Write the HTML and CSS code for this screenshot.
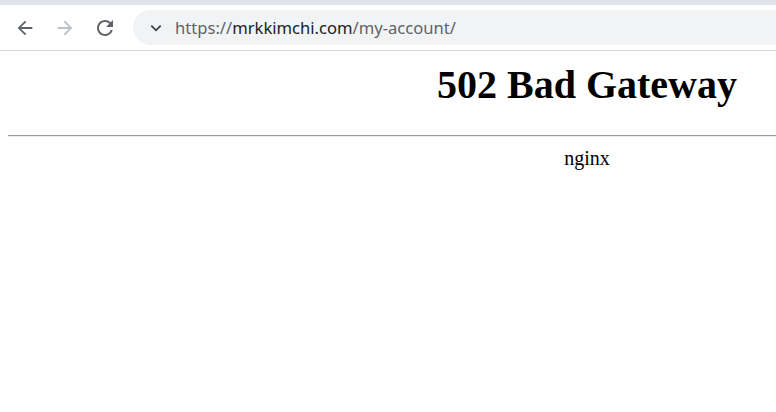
FILE: index.html
```html
<!DOCTYPE html>
<html lang="en">
<head>
    <meta charset="UTF-8">
    <title>502 Bad Gateway</title>
    <link rel="stylesheet" href="styles.css">
</head>
<body>
    <div class="tabstrip"></div>
    <div class="toolbar">
        <button class="nav-btn" aria-label="Back">
            <svg width="22" height="22" viewBox="0 0 24 24"><path d="M20 11H7.83l5.59-5.59L12 4l-8 8 8 8 1.41-1.41L7.83 13H20v-2z" fill="#5f6368"/></svg>
        </button>
        <button class="nav-btn" aria-label="Forward">
            <svg width="22" height="22" viewBox="0 0 24 24"><path d="M12 4l-1.41 1.41L16.17 11H4v2h12.17l-5.58 5.59L12 20l8-8z" fill="#bdc1c6"/></svg>
        </button>
        <button class="nav-btn" aria-label="Reload">
            <svg width="24" height="24" viewBox="0 0 24 24"><path d="M17.65 6.35A7.958 7.958 0 0 0 12 4c-4.42 0-7.99 3.58-7.99 8s3.57 8 7.99 8c3.730 0 6.840-2.55 7.73-6h-2.08A5.99 5.99 0 0 1 12 18c-3.31 0-6-2.69-6-6s2.69-6 6-6c1.66 0 3.14.69 4.22 1.78L13 11h7V4l-2.35 2.35z" fill="#5f6368"/></svg>
        </button>
        <div class="omnibox">
            <svg class="chevron" width="14" height="14" viewBox="0 0 24 24"><path d="M4 8l8 8 8-8" fill="none" stroke="#3c4043" stroke-width="3"/></svg>
            <span class="url"><span class="dim">https://</span>mrkkimchi.com<span class="dim">/my-account/</span></span>
        </div>
    </div>
    <div class="viewport">
        <div class="page">
            <h1>502 Bad Gateway</h1>
            <hr>
            <p class="server">nginx</p>
        </div>
    </div>
</body>
</html>
```

FILE: styles.css
```css
html, body {
    margin: 0;
    padding: 0;
    background-color: #fff;
    overflow: hidden;
}
.tabstrip {
    height: 5px;
    background-color: #dfe2e6;
}
.toolbar {
    display: flex;
    align-items: center;
    height: 45px;
    padding-left: 5px;
    border-bottom: 1px solid #d6d6d6;
}
.nav-btn {
    width: 40px;
    height: 36px;
    border: 0;
    padding: 0;
    background: none;
    display: flex;
    align-items: center;
    justify-content: center;
}
.omnibox {
    display: flex;
    align-items: center;
    margin-left: 8px;
    height: 35px;
    flex: 1;
    background-color: #f1f3f4;
    border-radius: 18px 0 0 18px;
    padding-left: 16px;
}
.chevron {
    margin-right: 12px;
}
.url {
    font-family: "Noto Sans", sans-serif;
    font-size: 16.6px;
    color: #202124;
    white-space: nowrap;
}
.url .dim {
    color: #5f6368;
}
.viewport {
    width: 776px;
    overflow: hidden;
}
.page {
    width: 1158px;
    padding: 0 8px;
    font-family: "Liberation Serif", "Times New Roman", serif;
    font-size: 20px;
    color: #000;
}
.page h1 {
    font-size: 40px;
    text-align: center;
    margin: 10px 0 0;
}
.page hr {
    margin: 27px 0 0;
    border: 0;
    border-top: 1px solid #9a9a9a;
    border-bottom: 1px solid #eee;
}
.server {
    text-align: center;
    margin: 10px 0 0;
}
```
